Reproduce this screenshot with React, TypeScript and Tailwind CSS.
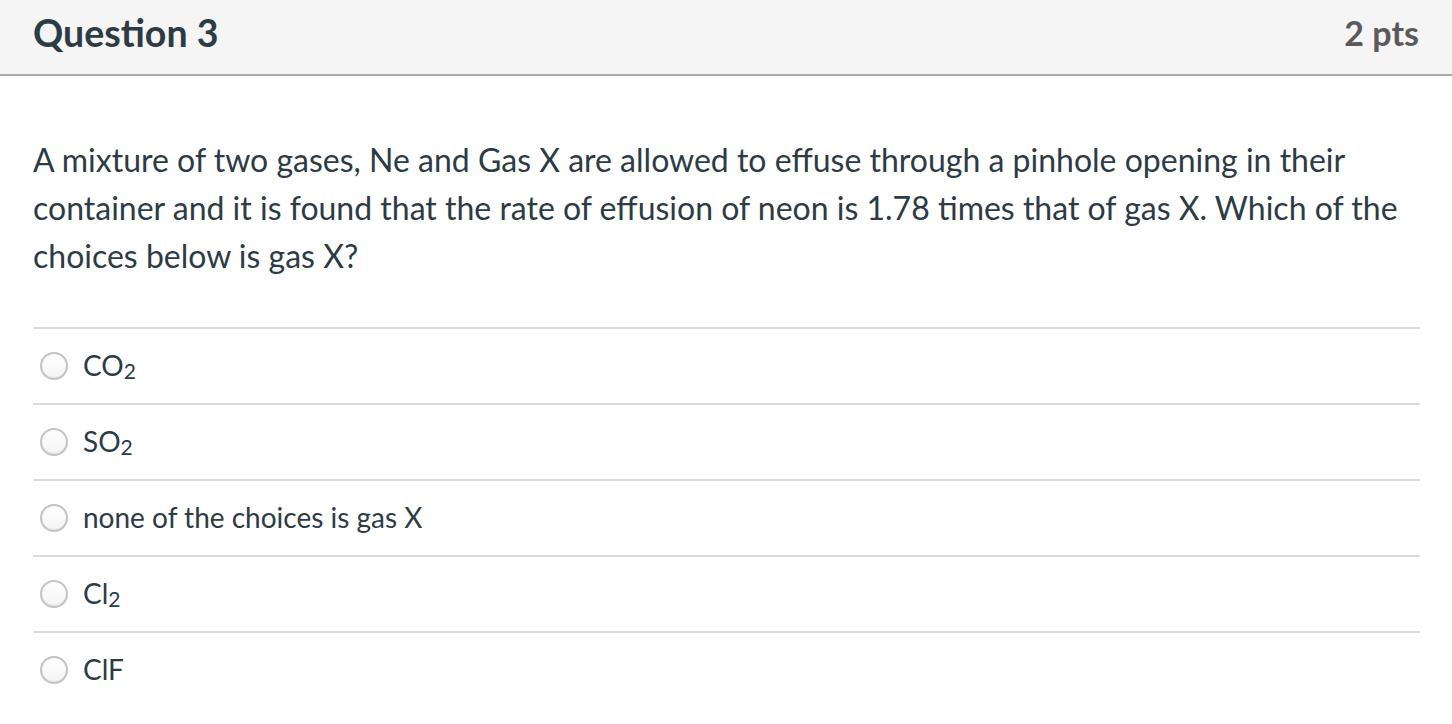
const answers: { label: React.ReactNode }[] = [
  { label: <>CO<sub className="text-[21px] relative top-[3px] align-baseline">2</sub></> },
  { label: <>SO<sub className="text-[21px] relative top-[3px] align-baseline">2</sub></> },
  { label: "none of the choices is gas X" },
  { label: <>Cl<sub className="text-[21px] relative top-[3px] align-baseline">2</sub></> },
  { label: "ClF" },
];

function Radio() {
  return (
    <span className="block w-[28px] h-[28px] rounded-full border-2 border-[#c4c4c4] bg-gradient-to-b from-white to-[#f4f4f4] shadow-[inset_0_-1px_1px_rgba(0,0,0,0.08)] shrink-0" />
  );
}

export default function App() {
  return (
    <div className="min-h-screen bg-white text-[#2d3b45] font-['Lato',sans-serif]">
      <div className="h-[76px] bg-[#f5f5f5] border-b-2 border-[#a9a9a9] flex items-center justify-between px-[33px]">
        <h2 className="text-[37.5px] font-bold leading-none -mt-[8px]">Question 3</h2>
        <span className="text-[34px] font-bold text-[#5a5a5a] leading-none -mt-[8px]">2 pts</span>
      </div>
      <div className="px-[33px] pt-[60px]">
        <p className="text-[32px] leading-[48px] pr-[20px]">
          A mixture of two gases, Ne and Gas X are allowed to effuse through a pinhole opening in their container and it is found that the rate of effusion of neon is 1.78 times that of gas X. Which of the choices below is gas X?
        </p>
        <div className="mt-[47px] mr-[-1px]">
          {answers.map((a, i) => (
            <div key={i} className="h-[76px] border-t-2 border-[#dcdcdc] flex items-center gap-[15px] pl-[7px]">
              <Radio />
              <span className="text-[28px] leading-none -mt-[3px]">{a.label}</span>
            </div>
          ))}
        </div>
      </div>
    </div>
  );
}
